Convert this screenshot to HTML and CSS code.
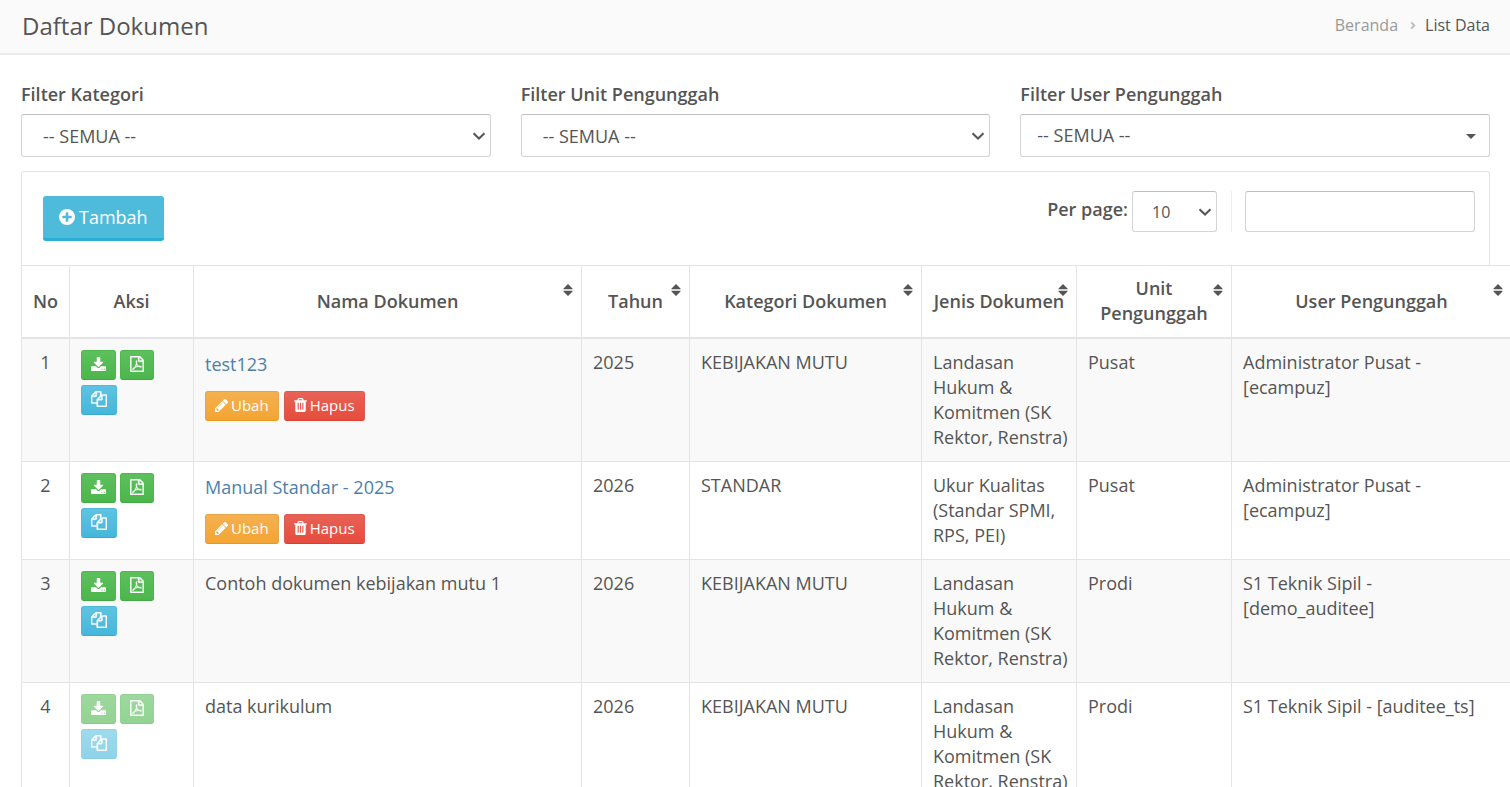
FILE: index.html
```html
<!DOCTYPE html>
<html lang="id">
<head>
<meta charset="utf-8">
<meta name="viewport" content="width=device-width, initial-scale=1">
<title>Daftar Dokumen</title>
<link rel="stylesheet" href="styles.css">
</head>
<body>
<svg class="sprite" aria-hidden="true">
  <symbol id="download" viewBox="0 0 1664 1536"><path d="M1280 1344q0-26-19-45t-45-19-45 19-19 45 19 45 45 19 45-19 19-45zm256 0q0-26-19-45t-45-19-45 19-19 45 19 45 45 19 45-19 19-45zm128-224v320q0 40-28 68t-68 28H96q-40 0-68-28t-28-68v-320q0-40 28-68t68-28h465l135 136q58 56 136 56t136-56l136-136h464q40 0 68 28t28 68zm-325-569q17 41-14 70l-448 448q-18 19-45 19t-45-19L339 621q-31-29-14-70 17-39 59-39h256V64q0-26 19-45T704 0h256q26 0 45 19t19 45v448h256q42 0 59 39z"/></symbol>
  <symbol id="pdf" viewBox="0 0 1536 1792"><path d="M1468 380q28 28 48 76t20 88v1152q0 40-28 68t-68 28H96q-40 0-68-28t-28-68V96q0-40 28-68T96 0h896q40 0 88 20t76 48zm-444-244v376h376q-10-29-22-41l-313-313q-12-12-41-22zm384 1528V640H992q-40 0-68-28t-28-68V128H128v1536h1280zm-514-593q33 26 84 56 59-7 117-7 147 0 177 49 16 22 2 52 0 1-1 2l-2 2v1q-6 38-71 38-48 0-115-20t-130-53q-221 24-392 83-153 262-242 262-15 0-28-7l-24-12q-1-1-6-5-10-10-6-36 9-40 56-91.500t132-96.500q14-9 23 6 2 2 2 4 52-85 107-197 68-136 104-262-24-82-30.500-159.500t6.500-127.500q11-40 42-40h22q23 0 35 15 18 21 9 68-2 6-4 8 1 3 1 8v30q-2 123-14 192 55 164 146 238zm-576 411q52-24 137-158-51 40-87.500 84t-49.500 74zm398-920q-15 42-2 132 1-7 7-44 0-3 7-43 1-4 4-8-1-1-1-2t-1-2q-1-22-13-36 0 1-1 2v2zm-124 661q135-54 284-81-2-1-13-9.500t-16-13.500q-76-67-127-176-27 86-83 197-30 56-45 83zm646-16q-24-24-140-24 76 28 124 28 14 0 18-1 0-1-2-3z"/></symbol>
  <symbol id="copy" viewBox="0 0 1792 1792"><path d="M1696 384q40 0 68 28t28 68v1216q0 40-28 68t-68 28H736q-40 0-68-28t-28-68v-288H96q-40 0-68-28t-28-68V640q0-40 20-88t48-76L476 68q28-28 76-48t88-20h416q40 0 68 28t28 68v328q68-40 128-40h416zm-544 213L853 896h299V597zM512 213L213 512h299V213zm196 647l316-316V128H640v416q0 40-28 68t-68 28H128v640h512v-256q0-40 20-88t48-76zm956 804V512h-384v416q0 40-28 68t-68 28H768v640h896z"/></symbol>
  <symbol id="pencil" viewBox="0 149 1515 1515"><path d="M363 1536l91-91-235-235-91 91v107h128v128h107zm523-928q0-22-22-22-10 0-17 7l-542 542q-7 7-7 17 0 22 22 22 10 0 17-7l542-542q7-7 7-17zm-54-192l416 416-832 832H0v-416zm683 96q0 53-37 90l-166 166-416-416 166-165q36-38 90-38 53 0 91 38l235 234q37 39 37 91z"/></symbol>
  <symbol id="trash" viewBox="0 128 1408 1536"><path d="M512 1376V672q0-14-9-23t-23-9h-64q-14 0-23 9t-9 23v704q0 14 9 23t23 9h64q14 0 23-9t9-23zm256 0V672q0-14-9-23t-23-9h-64q-14 0-23 9t-9 23v704q0 14 9 23t23 9h64q14 0 23-9t9-23zm256 0V672q0-14-9-23t-23-9h-64q-14 0-23 9t-9 23v704q0 14 9 23t23 9h64q14 0 23-9t9-23zM480 384h448l-48-117q-7-9-17-11H546q-10 2-17 11zm928 32v64q0 14-9 23t-23 9h-96v948q0 83-47 143.500T1120 1664H288q-66 0-113-58.500T128 1464V512H32q-14 0-23-9t-9-23v-64q0-14 9-23t23-9h309l70-167q15-37 54-63t79-26h320q40 0 79 26t54 63l70 167h309q14 0 23 9t9 23z"/></symbol>
  <symbol id="plus" viewBox="0 0 16 16"><path fill-rule="evenodd" d="M8 0a8 8 0 1 1 0 16A8 8 0 0 1 8 0zM7.300 3.300q-.6 0-.6.6v2.800H3.900q-.6 0-.6.6v1.400q0 .6.6.6h2.800v2.800q0 .6.6.6h1.400q.6 0 .6-.6V9.300h2.800q.6 0 .6-.6V7.300q0-.6-.6-.6H9.300V3.900q0-.6-.6-.6z"/></symbol>
  <symbol id="chevron" viewBox="0 0 14 8"><path d="M1.500 1.200 7 6.500l5.500-5.300" fill="none" stroke="currentColor" stroke-width="2"/></symbol>
  <symbol id="caret" viewBox="0 0 10 5"><path d="M0 0h10L5 5z"/></symbol>
  <symbol id="sort" viewBox="0 0 10 12"><path d="M5 0l4.500 4.500v.7h-9v-.7zM5 12l4.500-4.500v-.7h-9v.7z"/></symbol>
  <symbol id="angle" viewBox="0 0 6 10"><path d="M1 1.500 4.500 5 1 8.500" fill="none" stroke="currentColor" stroke-width="2"/></symbol>
</svg>

<header class="page-header">
  <h1 class="page-title">Daftar Dokumen</h1>
  <nav class="breadcrumb" aria-label="Breadcrumb">
    <a class="crumb-link" href="#">Beranda</a>
    <svg class="crumb-sep"><use href="#angle"/></svg>
    <span>List Data</span>
  </nav>
</header>

<main class="content">
  <form class="filters">
    <div class="field">
      <label for="kategori">Filter Kategori</label>
      <div class="select-box"><select id="kategori" class="control"><option>-- SEMUA --</option></select><svg class="chevron"><use href="#chevron"/></svg></div>
    </div>
    <div class="field">
      <label for="unit">Filter Unit Pengunggah</label>
      <div class="select-box"><select id="unit" class="control"><option>-- SEMUA --</option></select><svg class="chevron"><use href="#chevron"/></svg></div>
    </div>
    <div class="field">
      <label for="user">Filter User Pengunggah</label>
      <div class="select-box"><select id="user" class="control picker"><option>-- SEMUA --</option></select><svg class="caret"><use href="#caret"/></svg></div>
    </div>
  </form>

  <section class="panel">
    <div class="toolbar">
      <button type="button" class="btn-add"><svg class="icon-plus"><use href="#plus"/></svg>Tambah</button>
      <div class="tools">
        <label class="per-page" for="perpage">Per page:</label>
        <div class="select-box"><select id="perpage" class="control small"><option>10</option></select><svg class="chevron"><use href="#chevron"/></svg></div>
        <div class="search"><input type="search" class="control small search-input" aria-label="Cari"></div>
      </div>
    </div>
    <table class="documents">
      <colgroup><col class="c-no"><col class="c-aksi"><col><col class="c-tahun"><col class="c-kategori"><col class="c-jenis"><col class="c-jenis"><col class="c-user"></colgroup>
      <thead>
        <tr>
          <th>No</th>
          <th>Aksi</th>
          <th>Nama Dokumen<svg class="sort"><use href="#sort"/></svg></th>
          <th>Tahun<svg class="sort"><use href="#sort"/></svg></th>
          <th>Kategori Dokumen<svg class="sort"><use href="#sort"/></svg></th>
          <th class="nowrap">Jenis Dokumen<svg class="sort"><use href="#sort"/></svg></th>
          <th>Unit Pengunggah<svg class="sort"><use href="#sort"/></svg></th>
          <th>User Pengunggah<svg class="sort"><use href="#sort"/></svg></th>
        </tr>
      </thead>
      <tbody>
        <tr>
          <td class="num">1</td>
          <td><div class="actions"><button class="btn green" aria-label="Unduh"><svg class="i-download"><use href="#download"/></svg></button><button class="btn green" aria-label="PDF"><svg class="i-pdf"><use href="#pdf"/></svg></button><button class="btn blue" aria-label="Salin"><svg class="i-copy"><use href="#copy"/></svg></button></div></td>
          <td><a class="doc-link" href="#">test123</a><div class="edit"><button class="btn orange"><svg class="i-edit"><use href="#pencil"/></svg>Ubah</button><button class="btn red"><svg class="i-trash"><use href="#trash"/></svg>Hapus</button></div></td>
          <td>2025</td><td>KEBIJAKAN MUTU</td><td class="jenis">Landasan Hukum &amp; Komitmen (SK Rektor, Renstra)</td><td>Pusat</td><td>Administrator Pusat - [ecampuz]</td>
        </tr>
        <tr>
          <td class="num">2</td>
          <td><div class="actions"><button class="btn green" aria-label="Unduh"><svg class="i-download"><use href="#download"/></svg></button><button class="btn green" aria-label="PDF"><svg class="i-pdf"><use href="#pdf"/></svg></button><button class="btn blue" aria-label="Salin"><svg class="i-copy"><use href="#copy"/></svg></button></div></td>
          <td><a class="doc-link" href="#">Manual Standar - 2025</a><div class="edit"><button class="btn orange"><svg class="i-edit"><use href="#pencil"/></svg>Ubah</button><button class="btn red"><svg class="i-trash"><use href="#trash"/></svg>Hapus</button></div></td>
          <td>2026</td><td>STANDAR</td><td class="jenis">Ukur Kualitas (Standar SPMI, RPS, PEI)</td><td>Pusat</td><td>Administrator Pusat - [ecampuz]</td>
        </tr>
        <tr>
          <td class="num">3</td>
          <td><div class="actions"><button class="btn green" aria-label="Unduh"><svg class="i-download"><use href="#download"/></svg></button><button class="btn green" aria-label="PDF"><svg class="i-pdf"><use href="#pdf"/></svg></button><button class="btn blue" aria-label="Salin"><svg class="i-copy"><use href="#copy"/></svg></button></div></td>
          <td>Contoh dokumen kebijakan mutu 1</td>
          <td>2026</td><td>KEBIJAKAN MUTU</td><td class="jenis">Landasan Hukum &amp; Komitmen (SK Rektor, Renstra)</td><td>Prodi</td><td>S1 Teknik Sipil - [demo_auditee]</td>
        </tr>
        <tr>
          <td class="num">4</td>
          <td><div class="actions"><button class="btn green" disabled aria-label="Unduh"><svg class="i-download"><use href="#download"/></svg></button><button class="btn green" disabled aria-label="PDF"><svg class="i-pdf"><use href="#pdf"/></svg></button><button class="btn blue" disabled aria-label="Salin"><svg class="i-copy"><use href="#copy"/></svg></button></div></td>
          <td>data kurikulum</td>
          <td>2026</td><td>KEBIJAKAN MUTU</td><td class="jenis">Landasan Hukum &amp; Komitmen (SK Rektor, Renstra)</td><td>Prodi</td><td>S1 Teknik Sipil - [auditee_ts]</td>
        </tr>
      </tbody>
    </table>
  </section>
</main>
</body>
</html>
```

FILE: styles.css
```css
* { box-sizing: border-box; }
html { overflow: hidden; }
body {
  margin: 0;
  background: #fff;
  color: #555;
  font: 18px/25px "Open Sans", sans-serif;
}
svg { fill: currentColor; flex: none; }
button, select, input { font: inherit; color: inherit; }
.sprite { display: none; }

.page-header {
  display: flex;
  align-items: center;
  justify-content: space-between;
  height: 55px;
  padding: 0 20px 2px 22px;
  background: #fafafa;
  border-bottom: 2px solid #ebebeb;
}
.page-title { margin: 0; font-size: 24px; font-weight: 400; line-height: 34px; }
.breadcrumb { display: flex; align-items: center; font-size: 16px; }
.crumb-link { color: #999; text-decoration: none; }
.crumb-sep { width: 6px; height: 9px; margin: 0 9px 0 12px; color: #bbb; }

.content { padding: 27px 20px 0 21px; }
.filters { display: grid; grid-template-columns: repeat(3, 1fr); gap: 30px; margin-bottom: 14px; }
.field label { display: block; margin-bottom: 7px; }
label { font-weight: 600; }
.select-box { position: relative; }
.control {
  display: block;
  width: 100%;
  height: 43px;
  margin: 0;
  padding: 2px 21px 0;
  appearance: none;
  background: #fff;
  border: 1px solid #d4d4d4;
  border-top-color: #c0c0c0;
  border-radius: 3px;
  outline: 0;
}
.picker { padding: 0 16px; }
.small { height: 41px; padding: 2px 19px 0; font-size: 16px; }
.chevron, .caret { position: absolute; pointer-events: none; }
.chevron { right: 5px; top: calc(50% - 4px); width: 14px; height: 8px; }
.caret { right: 14px; top: calc(50% - 2px); width: 10px; height: 5px; }

.toolbar {
  display: flex;
  align-items: flex-start;
  justify-content: space-between;
  height: 94px;
  padding: 19px 14px 0 21px;
  border: 1px solid #e4e4e4;
  border-bottom: 0;
  border-radius: 3px 3px 0 0;
}
.btn-add {
  display: flex;
  align-items: center;
  gap: 4px;
  height: 45px;
  margin-top: 5px;
  padding: 0 16px;
  color: #fff;
  background: #4fbbdb;
  border: 0;
  border-bottom: 3px solid #29aed6;
  border-radius: 3px;
}
.icon-plus { width: 16px; height: 16px; }
.tools { display: flex; }
.per-page { padding: 6px 4px 0 0; }
.tools .select-box { width: 85px; }
.search { margin-left: 14px; padding-left: 13px; border-left: 1px solid #eee; }
.search-input { width: 230px; }

.documents {
  width: calc(100% + 22px);
  table-layout: fixed;
  border-collapse: collapse;
}
.c-no { width: 48px; }
.c-aksi { width: 124px; }
.c-tahun { width: 108px; }
.c-kategori { width: 232px; }
.c-jenis { width: 155px; }
.c-user { width: 280px; }
th, td { padding: 11px; border: 1px solid #e4e4e4; }
th { position: relative; padding: 10px 11px; font-weight: 600; border-bottom-width: 2px; }
thead tr { height: 72px; }
td { vertical-align: top; }
.jenis { padding-right: 6px; }
.nowrap { white-space: nowrap; }
.num { text-align: center; }
tbody tr:nth-child(odd) { background: #f9f9f9; }
.sort { position: absolute; top: 18px; right: 8px; width: 10px; height: 12px; }

.actions { display: flex; flex-wrap: wrap; gap: 5px 4px; width: 80px; }
.edit { display: flex; gap: 5px; margin-top: 12px; }
.doc-link { display: block; line-height: 29px; color: #4e7fa9; text-decoration: none; }
.btn {
  display: flex;
  align-items: center;
  gap: 3px;
  height: 30px;
  padding: 0 9px 1px;
  color: #fff;
  font-size: 15px;
  border: 1px solid;
  border-radius: 3px;
}
.btn:disabled { opacity: .6; }
.green { background: linear-gradient(#5dc05d, #4cb64c); border-color: #4fb54f #4fb54f #43a943; }
.blue { background: linear-gradient(#5fc3e2, #45b7db); border-color: #50b8d8 #50b8d8 #3aacd0; }
.orange { background: linear-gradient(#f5b050, #f3a533); border-color: #e8a548 #e8a548 #ed9620; }
.red { background: linear-gradient(#e86256, #e64c3d); border-color: #db5b50 #db5b50 #de4030; }
.btn svg { overflow: visible; }
.i-download { width: 15px; height: 14px; }
.i-pdf { width: 14px; height: 16px; }
.i-copy { width: 16px; height: 16px; }
.i-pdf, .i-copy { stroke: #fff; stroke-width: 50px; }
.i-edit { width: 13px; height: 13px; }
.i-trash { width: 13px; height: 14px; }
```
